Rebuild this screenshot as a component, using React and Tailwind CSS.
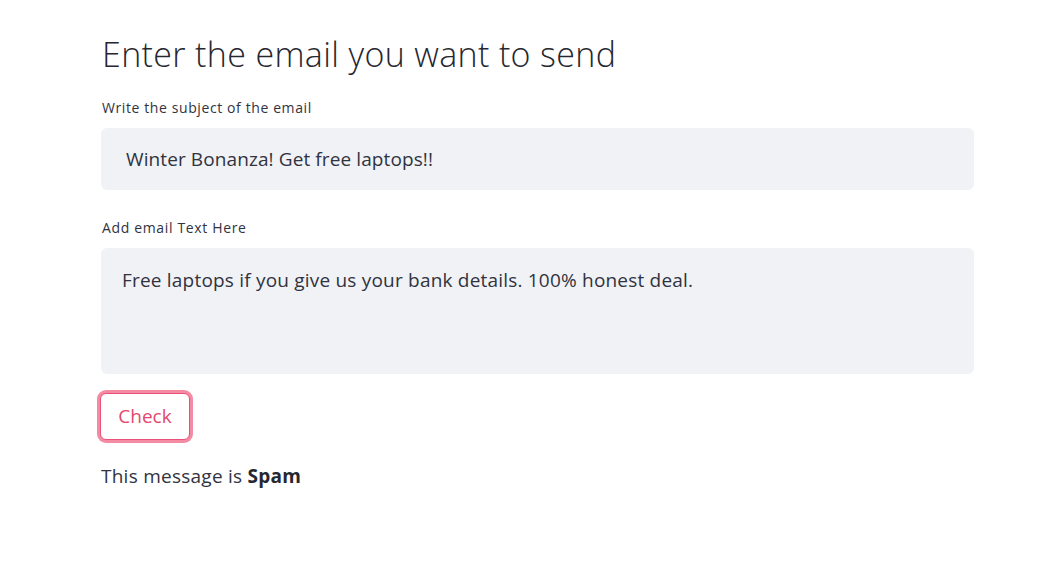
export default function App() {
    return (
        <div className="min-h-[571px] w-full bg-white font-['Open_Sans',sans-serif] text-[#31333f]">
            <div className="ml-[101px] w-[873px] pt-[30px]">
                <h1 className="text-[34px] leading-[48px] font-light tracking-[0.35px] text-[#262730] pl-px">
                    Enter the email you want to send
                </h1>

                <div className="mt-[20px] text-[14px] leading-[20px] tracking-[0.6px] pl-px">Write the subject of the email</div>
                <div className="mt-[10px] h-[62px] rounded-md bg-[#f0f2f6] flex items-center pl-[25px] text-[19px] tracking-[0.1px]">
                    Winter Bonanza! Get free laptops!!
                </div>

                <div className="mt-[28px] text-[14px] leading-[20px] tracking-[0.65px] pl-px">Add email Text Here</div>
                <div className="mt-[10px] h-[126px] rounded-md bg-[#f0f2f6] pl-[21px] pt-[19px] text-[19px] leading-[26px] tracking-[0.2px]">
                    Free laptops if you give us your bank details. 100% honest deal.
                </div>

                <button className="mt-[19px] h-[47px] w-[90px] rounded-md border border-[#e8507a] ring-[3px] ring-[#f58ba3] bg-white text-[19px] text-[#e5466c] ml-[-1px]">
                    Check
                </button>

                <p className="mt-[23px] text-[19px] leading-[26px] tracking-[0.25px]">
                    This message is <span className="font-bold text-[#262730]">Spam</span>
                </p>
            </div>
        </div>
    );
}
